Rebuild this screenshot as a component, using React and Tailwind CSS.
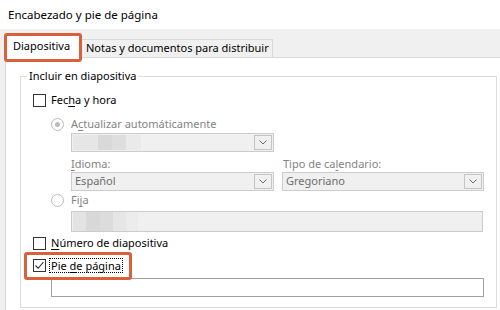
import React from 'react';

// disabled-looking combobox with a small chevron button
function Combo({ value, blurred, width }) {
  return (
    <div className={`flex h-[19px] items-stretch border border-[#cccccc] bg-[#f0f0f0] ${width}`}>
      <div className="flex flex-1 items-center pl-[3px] text-[#6d6d6d]">
        {blurred ? <Smudge /> : value}
      </div>
      <div className="m-px flex w-[18px] items-center justify-center border border-[#c4c4c4]">
        <svg width="8" height="5" viewBox="0 0 8 5">
          <path d="M0.5 0.5 L4 4 L7.5 0.5" fill="none" stroke="#6d6d6d" strokeWidth="1" />
        </svg>
      </div>
    </div>
  );
}

// blurred, pixelated block standing in for hidden text
function Smudge() {
  return (
    <div className="-ml-[2px] flex h-[15px]">
      <div className="w-[25px] bg-[#e6e6e6]" />
      <div className="w-[14px] bg-[#d9d9d9]" />
      <div className="w-[14px] bg-[#dedede]" />
      <div className="w-[15px] bg-[#eaeaea]" />
    </div>
  );
}

function Checkbox({ checked }) {
  return (
    <div className="flex h-[13px] w-[13px] shrink-0 items-center justify-center border border-[#333333] bg-white">
      {checked && (
        <svg width="11" height="11" viewBox="0 0 11 11">
          <path d="M1.5 5.5 L4.2 8.3 L9.5 2" fill="none" stroke="#222" strokeWidth="1.1" />
        </svg>
      )}
    </div>
  );
}

function Radio({ checked }) {
  return (
    <div className="flex h-[13px] w-[13px] shrink-0 items-center justify-center rounded-full border border-[#bcbcbc] bg-white">
      {checked && <div className="h-[5px] w-[5px] rounded-full bg-[#bcbcbc]" />}
    </div>
  );
}

export default function App() {
  return (
    <div className="h-[310px] w-[500px] overflow-hidden bg-[#f0f0f0] font-['Noto_Sans',sans-serif] text-[11px] text-black">
      {/* title */}
      <div className="flex h-[29px] items-center bg-white pl-[8px] text-[11.5px]">
        Encabezado y pie de página
      </div>

      {/* tabs */}
      <div className="flex h-[28px] items-end pl-[5px]">
        <div className="relative z-10 -mb-px flex h-[24px] w-[77px] items-start bg-white pl-[8px] pt-[4px]">
          Diapositiva
          <div className="absolute left-[-1px] top-[-1px] h-[29px] w-[78px] rounded-[3px] border-[3px] border-[#d9603b]" />
        </div>
        <div className="flex h-[18px] w-[191px] items-center border-r border-t border-[#d9d9d9] pl-[4px]">
          Notas y documentos para distribuir
        </div>
      </div>

      {/* tab panel */}
      <div className="ml-[5px] h-[260px] border-l border-t border-[#d9d9d9] bg-white pl-[14px] pt-[18px]">
        <div className="relative h-[232px] w-[477px] border border-[#dcdcdc] pl-[12px] pt-[17px]">
          <span className="absolute left-[6px] top-[-9px] bg-white px-[2px] leading-[16px]">
            Incluir en diapositiva
          </span>

          <div className="flex h-[13px] items-center gap-[5px]">
            <Checkbox />
            <span>
              Fec<u className="underline-offset-2">h</u>a y hora
            </span>
          </div>

          <div className="ml-[18px] mt-[11px] flex h-[13px] items-center gap-[7px] text-[#838383]">
            <Radio checked />
            <span>
              A<u className="underline-offset-2">c</u>tualizar automáticamente
            </span>
          </div>

          <div className="ml-[38px] mt-[2px]">
            <Combo blurred width="w-[203px]" />
          </div>

          <div className="ml-[38px] mt-[4px] flex gap-[8px]">
            <div>
              <div className="h-[16px] leading-[16px] text-[#838383]">
                <u className="underline-offset-2">I</u>dioma:
              </div>
              <Combo value="Español" width="w-[203px]" />
            </div>
            <div>
              <div className="h-[16px] pl-px leading-[16px] text-[#838383]">
                Tipo de ca<u className="underline-offset-2">l</u>endario:
              </div>
              <Combo value="Gregoriano" width="w-[202px]" />
            </div>
          </div>

          <div className="ml-[18px] mt-[3px] flex h-[13px] items-center gap-[7px] text-[#838383]">
            <Radio />
            <span>
              Fi<u className="underline-offset-2">j</u>a
            </span>
          </div>

          <div className="ml-[38px] mt-[4px] flex h-[21px] w-[412px] items-center border border-[#cccccc] bg-[#f0f0f0] pl-px">
            <div className="flex h-[19px]">
              <div className="w-[13px] bg-[#e3e3e3]" />
              <div className="w-[14px] bg-[#d8d8d8]" />
              <div className="w-[13px] bg-[#dcdcdc]" />
              <div className="w-[13px] bg-[#e6e6e6]" />
              <div className="w-[12px] bg-[#ececec]" />
            </div>
          </div>

          <div className="mt-[5px] flex h-[13px] items-center gap-[5px]">
            <Checkbox />
            <span>
              <u className="underline-offset-2">N</u>úmero de diapositiva
            </span>
          </div>

          <div className="relative mt-[9px] flex h-[13px] items-center gap-[3px]">
            <Checkbox checked />
            <span className="border border-dotted border-black px-px leading-[13px]">
              Pie <u className="underline-offset-2">d</u>e página
            </span>
            <div className="absolute left-[-9px] top-[-7px] z-10 h-[28px] w-[108px] rounded-[3px] border-[3px] border-[#d9603b]" />
          </div>

          <div className="ml-[18px] mt-[6px] h-[19px] w-[433px] border border-[#a0a0a0] bg-white" />
        </div>
      </div>
    </div>
  );
}
